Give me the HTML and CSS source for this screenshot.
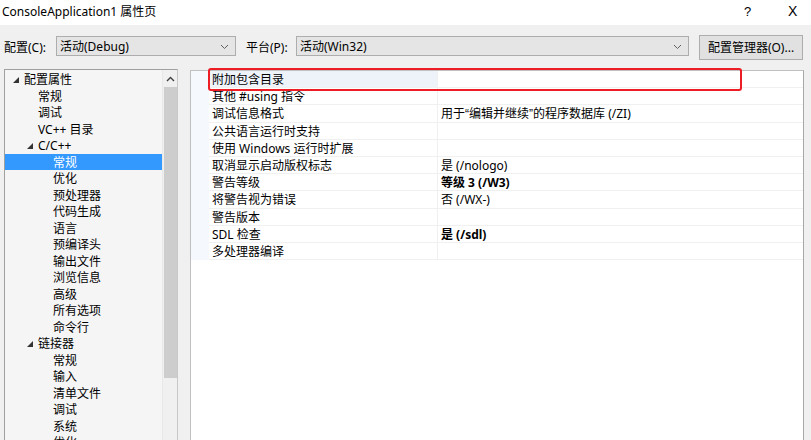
FILE: index.html
```html
<!DOCTYPE html>
<html>

<head>
    <title>ConsoleApplication1 属性页</title>
    <link rel="stylesheet" href="styles.css">
</head>

<body>
    <div class="titlebar">
        <span class="title">ConsoleApplication1 属性页</span>
        <span class="help">?</span>
        <span class="close">X</span>
    </div>

    <div class="toolbar">
        <span class="label">配置(C):</span>
        <div class="combo combo-config">
            <span>活动(Debug)</span>
            <svg class="chev" width="9" height="6" viewBox="0 0 9 6"><path d="M1 1 L4.5 4.5 L8 1" fill="none" stroke="#606060" stroke-width="1"/></svg>
        </div>
        <span class="label label-platform">平台(P):</span>
        <div class="combo combo-platform">
            <span>活动(Win32)</span>
            <svg class="chev" width="9" height="6" viewBox="0 0 9 6"><path d="M1 1 L4.5 4.5 L8 1" fill="none" stroke="#606060" stroke-width="1"/></svg>
        </div>
        <div class="btn">配置管理器(O)...</div>
    </div>

    <div class="main">
        <div class="tree">
            <div class="tree-list">
                <div class="node lvl0"><span class="tri"></span>配置属性</div>
                <div class="node lvl1">常规</div>
                <div class="node lvl1">调试</div>
                <div class="node lvl1">VC++ 目录</div>
                <div class="node lvl1"><span class="tri"></span>C/C++</div>
                <div class="node lvl2 selected">常规</div>
                <div class="node lvl2">优化</div>
                <div class="node lvl2">预处理器</div>
                <div class="node lvl2">代码生成</div>
                <div class="node lvl2">语言</div>
                <div class="node lvl2">预编译头</div>
                <div class="node lvl2">输出文件</div>
                <div class="node lvl2">浏览信息</div>
                <div class="node lvl2">高级</div>
                <div class="node lvl2">所有选项</div>
                <div class="node lvl2">命令行</div>
                <div class="node lvl1"><span class="tri"></span>链接器</div>
                <div class="node lvl2">常规</div>
                <div class="node lvl2">输入</div>
                <div class="node lvl2">清单文件</div>
                <div class="node lvl2">调试</div>
                <div class="node lvl2">系统</div>
                <div class="node lvl2">优化</div>
            </div>
            <div class="scrollbar">
                <div class="arrow">
                    <svg width="9" height="6" viewBox="0 0 9 6"><path d="M1 5 L4.5 1.5 L8 5" fill="none" stroke="#404040" stroke-width="1.4"/></svg>
                </div>
                <div class="thumb"></div>
            </div>
        </div>

        <div class="grid">
            <div class="grid-rows">
                <div class="row current"><div class="name">附加包含目录</div><div class="value"></div></div>
                <div class="row"><div class="name">其他 #using 指令</div><div class="value"></div></div>
                <div class="row"><div class="name">调试信息格式</div><div class="value">用于<span class="q">“</span>编辑并继续<span class="q">”</span>的程序数据库 (/ZI)</div></div>
                <div class="row"><div class="name">公共语言运行时支持</div><div class="value"></div></div>
                <div class="row"><div class="name">使用 Windows 运行时扩展</div><div class="value"></div></div>
                <div class="row"><div class="name">取消显示启动版权标志</div><div class="value">是 (/nologo)</div></div>
                <div class="row"><div class="name">警告等级</div><div class="value bold">等级 3 (/W3)</div></div>
                <div class="row"><div class="name">将警告视为错误</div><div class="value">否 (/WX-)</div></div>
                <div class="row"><div class="name">警告版本</div><div class="value"></div></div>
                <div class="row"><div class="name">SDL 检查</div><div class="value bold">是 (/sdl)</div></div>
                <div class="row"><div class="name">多处理器编译</div><div class="value"></div></div>
            </div>
            <!-- red annotation box -->
            <div class="mark"></div>
        </div>
    </div>
</body>

</html>
```

FILE: styles.css
```css
body {
    margin: 0;
    padding: 0;
    background-color: #f0f0f0;
    font-family: "Noto Sans", "Noto Sans CJK SC", sans-serif;
    font-size: 12px;
    color: #000;
    overflow: hidden;
    height: 440px;
}

.titlebar {
    height: 25px;
    background-color: #fff;
    display: flex;
    align-items: center;
    padding-left: 2px;
}

.title {
    flex: 1;
    font-size: 12px;
    margin-top: -3px;
}

.help {
    width: 44px;
    margin-top: -3px;
    font-family: "Liberation Sans", sans-serif;
    font-size: 13px;
}

.close {
    width: 23px;
    margin-top: -3px;
    font-family: "Liberation Sans", sans-serif;
    font-size: 14px;
}

.toolbar {
    height: 44px;
    display: flex;
    align-items: center;
    padding-left: 4px;
}

.label {
    width: 52px;
    margin-top: -1px;
}

.label-platform {
    width: 50px;
    margin-left: 10px;
}

.combo {
    height: 18px;
    margin-top: -2px;
    border: 1px solid #adadad;
    background-color: #e5e5e5;
    display: flex;
    align-items: center;
    justify-content: space-between;
    padding: 0 6px 0 3px;
}

.combo-config {
    width: 169px;
}

.combo-platform {
    width: 382px;
}

.chev {
    margin-top: 1px;
}

.btn {
    margin-left: 10px;
    width: 102px;
    height: 23px;
    border: 1px solid #adadad;
    background-color: #e1e1e1;
    display: flex;
    align-items: center;
    justify-content: center;
    white-space: nowrap;
}

.main {
    display: flex;
    padding-left: 4px;
    gap: 12px;
}

.tree {
    width: 172px;
    height: 380px;
    border: 1px solid #a0a0a0;
    border-right-color: #c8c8c8;
    background-color: #f5f5f5;
    display: flex;
}

.tree-list {
    flex: 1;
    padding-top: 1px;
}

.node {
    height: 16.5px;
    line-height: 18px;
    white-space: nowrap;
    position: relative;
}

.lvl0 {
    padding-left: 19px;
}

.lvl1 {
    padding-left: 33px;
}

.lvl2 {
    padding-left: 48px;
}

.node.selected {
    background-color: #3399ff;
    color: #fff;
}

.tri {
    display: inline-block;
    width: 0;
    height: 0;
    border-left: 6px solid transparent;
    border-bottom: 6px solid #333;
    margin-left: -11px;
    margin-right: 5px;
    vertical-align: 1px;
}

.scrollbar {
    width: 14px;
    background-color: #f0f0f0;
    border-left: 1px solid #e8e8e8;
}

.arrow {
    height: 17px;
    display: flex;
    align-items: center;
    justify-content: center;
}

.thumb {
    height: 291px;
    background-color: #cdcdcd;
    margin: 0 0 0 1px;
}

.grid {
    position: relative;
    width: 612px;
    height: 380px;
    margin-top: 1px;
    border: 1px solid #c0c0c0;
    border-right-color: #a8a8a8;
    background-color: #fff;
}

.grid-rows {
    background-color: #f5f8fc;
    padding-left: 18px;
}

.row {
    display: flex;
    height: 17.2px;
    line-height: 18px;
    background-color: #fff;
    border-bottom: 1px solid #f0f0f0;
    box-sizing: border-box;
}

.row .name {
    width: 225px;
    padding-left: 3px;
    border-right: 1px solid #f0f0f0;
    white-space: nowrap;
}

.row .value {
    flex: 1;
    padding-left: 3px;
    white-space: nowrap;
}

.row.current .name {
    background-color: #eef3fa;
}

.q {
    font-family: "Liberation Sans", sans-serif;
}

.bold {
    font-weight: bold;
}

.mark {
    position: absolute;
    left: 17px;
    top: -3px;
    width: 530px;
    height: 19px;
    border: 2px solid #ee1c25;
    border-radius: 3px;
}
```
